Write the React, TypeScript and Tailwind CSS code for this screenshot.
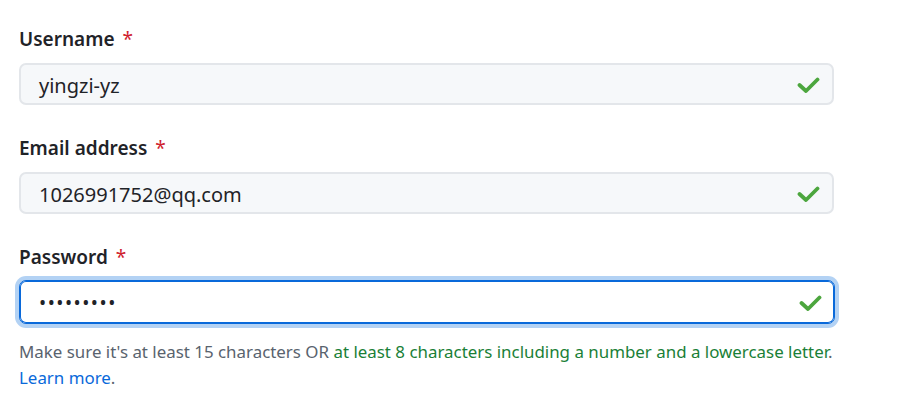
import React from "react";

const Check = () => (
  <svg width="24" height="20" viewBox="0 0 24 20" className="shrink-0">
    <polyline points="3.5,11 10,17 21.5,5.5" fill="none" stroke="#4ca63e" strokeWidth="3.8" strokeLinecap="round" strokeLinejoin="round" />
  </svg>
);

function Label({ text }: { text: string }) {
  return (
    <div className="text-[19px] leading-[26px] font-semibold text-[#1f2328]">
      {text} <span className="text-[#cf222e] font-normal ml-[3px]">*</span>
    </div>
  );
}

function Field({ label, value, mt }: { label: string; value: string; mt: string }) {
  return (
    <div className={mt}>
      <Label text={label} />
      <div className="mt-[11px] h-[42px] w-[815px] rounded-[7px] flex items-center justify-between pl-[18px] pr-[12px] bg-[#f6f8fa] border-2 border-[#e3e6ea]">
        <span className="text-[20px] text-[#1f2328] pt-[3px]">{value}</span>
        <Check />
      </div>
    </div>
  );
}

export default function App() {
  return (
    <div className="bg-white w-[917px] h-[413px] pl-[19px] pt-[26px]" style={{ fontFamily: '"Noto Sans", "Open Sans", sans-serif' }}>
      <Field label="Username" value="yingzi-yz" mt="" />
      <Field label="Email address" value="1026991752@qq.com" mt="mt-[30px]" />
      <div className="mt-[30px]">
        <Label text="Password" />
        <div className="mt-[10px] h-[44px] w-[816px] rounded-[7px] flex items-center justify-between pl-[19px] pr-[12px] bg-white border border-[#0969da] shadow-[inset_0_0_0_1px_#0969da,0_0_0_4px_#b3d2f4]">
          <span className="text-[19px] tracking-[1.5px] text-[#1f2328] pt-[3px]">•••••••••</span>
          <Check />
        </div>
      </div>
      <p className="mt-[15px] text-[16.9px] leading-[26px] text-[#59636e] w-[850px]">
        Make sure it's at least 15 characters OR{" "}
        <span className="text-[#1a7f37]">at least 8 characters</span>{" "}
        <span className="text-[#1a7f37]">including a number</span>{" "}
        <span className="text-[#1a7f37]">and a lowercase letter</span>.
        <br />
        <span className="text-[#0969da]">Learn more</span>.
      </p>
    </div>
  );
}
